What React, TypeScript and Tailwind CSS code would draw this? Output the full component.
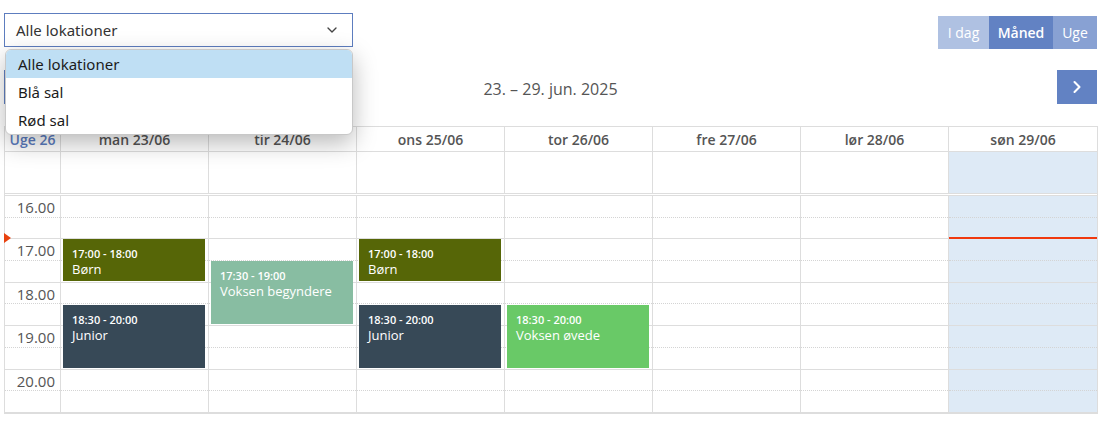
import { ChevronDown, ChevronLeft, ChevronRight } from "lucide-react";

const days = [
  "man 23/06",
  "tir 24/06",
  "ons 25/06",
  "tor 26/06",
  "fre 27/06",
  "lør 28/06",
  "søn 29/06",
];

const hours = ["16.00", "17.00", "18.00", "19.00", "20.00"];
const HOUR = 43.4;

type CalEvent = {
  day: number;
  start: number;
  end: number;
  time: string;
  title: string;
  color: string;
};

const events: CalEvent[] = [
  { day: 0, start: 17, end: 18, time: "17:00 - 18:00", title: "Børn", color: "bg-[#566607]" },
  { day: 0, start: 18.5, end: 20, time: "18:30 - 20:00", title: "Junior", color: "bg-[#374957]" },
  { day: 1, start: 17.5, end: 19, time: "17:30 - 19:00", title: "Voksen begyndere", color: "bg-[#88bda2]" },
  { day: 2, start: 17, end: 18, time: "17:00 - 18:00", title: "Børn", color: "bg-[#566607]" },
  { day: 2, start: 18.5, end: 20, time: "18:30 - 20:00", title: "Junior", color: "bg-[#374957]" },
  { day: 3, start: 18.5, end: 20, time: "18:30 - 20:00", title: "Voksen øvede", color: "bg-[#69c967]" },
];

function HourLines() {
  return (
    <>
      {hours.map((h) => (
        <div key={h} className="h-[43.4px] border-b border-[#dddddd] flex flex-col">
          <div className="h-[21.7px] border-b border-dotted border-[#d4d4d4]" />
        </div>
      ))}
    </>
  );
}

export default function App() {
  return (
    <div
      className="relative w-[1102px] h-[423px] bg-white text-[#555]"
      style={{ fontFamily: '"Open Sans", "Noto Sans", sans-serif' }}
    >
      {/* toolbar */}
      <div className="flex justify-between items-start">
        <div className="ml-1 mt-[13px] w-[349px] h-[34px] border border-[#5d7dbf] flex items-center justify-between pl-[11px] pr-[12px] text-[15px] text-[#333]" style={{ fontFamily: '"Noto Sans", "Open Sans", sans-serif' }}>
          <span>Alle lokationer</span>
          <ChevronDown className="w-[16px] h-[16px] text-[#444]" strokeWidth={2} />
        </div>
        <div className="mt-4 mr-[5px] flex text-[14px] text-white h-[33px]">
          <button className="w-[51px] bg-[#afc1e2]">I dag</button>
          <button className="w-[64px] bg-[#6282c3] font-semibold">Måned</button>
          <button className="w-[44px] bg-[#88a1d3]">Uge</button>
        </div>
      </div>

      {/* title row */}
      <div className="mt-[21px] flex items-center justify-between px-1 h-[34px]">
        <button className="w-10 h-[34px] bg-[#6282c3] flex items-center justify-center text-white">
          <ChevronLeft className="w-5 h-5" />
        </button>
        <div className="pt-[4px] text-[16px] text-[#555]">23. – 29. jun. 2025</div>
        <button className="mr-[1px] w-10 h-[34px] bg-[#6282c3] flex items-center justify-center text-white">
          <ChevronRight className="w-5 h-5" strokeWidth={2.5} />
        </button>
      </div>

      {/* calendar */}
      <div className="mt-[22px] mx-1 w-[1094px] border border-[#dddddd]">
        {/* header */}
        <div className="grid grid-cols-[56px_repeat(7,1fr)] h-[25px] text-[14px] font-semibold border-b border-[#dddddd]">
          <div className="flex items-center justify-center text-[#5b7cc0] border-r border-[#dddddd]">Uge 26</div>
          {days.map((d, i) => (
            <div
              key={d}
              className={`flex items-center justify-center ${i < 6 ? "border-r border-[#dddddd]" : ""}`}
            >
              {d}
            </div>
          ))}
        </div>
        {/* all-day */}
        <div className="grid grid-cols-[56px_repeat(7,1fr)] h-[44px] border-b-[3px] border-double border-[#dddddd]">
          <div className="border-r border-[#dddddd]" />
          {days.map((d, i) => (
            <div
              key={d}
              className={`${i < 6 ? "border-r border-[#dddddd]" : ""} ${i === 6 ? "bg-[#deeaf6]" : ""}`}
            />
          ))}
        </div>
        {/* time grid */}
        <div className="grid grid-cols-[56px_repeat(7,1fr)]">
          <div className="relative border-r border-[#dddddd]">
            {hours.map((h) => (
              <div key={h} className="h-[43.4px] border-b border-[#dddddd] relative">
                <div className="h-[21.7px] border-b border-dotted border-[#d4d4d4] text-right pr-[5px] pt-[1px] text-[15px] leading-[20px] text-[#555]">
                  {h}
                </div>
              </div>
            ))}
            <div className="absolute left-[-1px] top-[37px] w-0 h-0 border-y-[5px] border-y-transparent border-l-[7px] border-l-[#e8420f]" />
          </div>
          {days.map((d, i) => (
            <div
              key={d}
              className={`relative ${i < 6 ? "border-r border-[#dddddd]" : ""} ${i === 6 ? "bg-[#deeaf6]" : ""}`}
            >
              <HourLines />
              {i === 6 && <div className="absolute left-0 right-0 top-[41px] h-[2px] bg-[#f0390e]" />}
              {events
                .filter((e) => e.day === i)
                .map((e) => (
                  <div
                    key={e.title + e.time}
                    className={`absolute left-[2px] right-[3px] ${e.color} text-white pl-[9px] pt-[7px]`}
                    style={{
                      top: (e.start - 16) * HOUR,
                      height: (e.end - e.start) * HOUR - 2,
                    }}
                  >
                    <div className="text-[11px] leading-[15px] font-semibold">{e.time}</div>
                    <div className="text-[13px] leading-[17px] font-medium">{e.title}</div>
                  </div>
                ))}
            </div>
          ))}
        </div>
      </div>

      {/* dropdown menu */}
      <div
        className="absolute left-[5px] top-[49px] w-[348px] bg-white rounded-md border border-[#c8c8c8] shadow-[0_8px_24px_rgba(0,0,0,0.28)] overflow-hidden text-[15px] text-[#1b1b1b] z-10"
        style={{ fontFamily: '"Noto Sans", "Open Sans", sans-serif' }}
      >
        <div className="h-[28px] flex items-center pl-3 bg-[#bfdff4]">Alle lokationer</div>
        <div className="h-[28px] flex items-center pl-3">Blå sal</div>
        <div className="h-[28px] flex items-center pl-3">Rød sal</div>
      </div>
    </div>
  );
}
